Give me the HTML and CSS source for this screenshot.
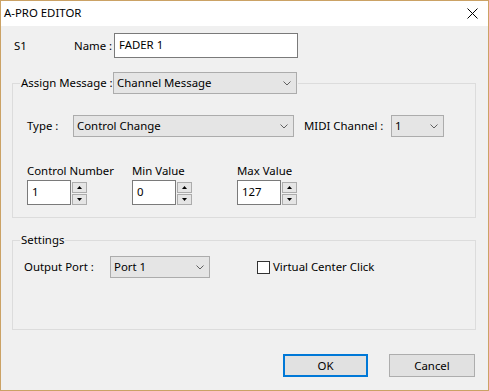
FILE: index.html
```html
<!DOCTYPE html>
<html lang="en">
<head>
    <meta charset="UTF-8">
    <title>A-PRO EDITOR</title>
    <link rel="stylesheet" href="styles.css">
</head>
<body>
    <div class="window">
        <div class="titlebar">
            <span class="title">A-PRO EDITOR</span>
            <svg class="close" width="11" height="11" viewBox="0 0 11 11">
                <path d="M0.5 0.5 L10.5 10.5 M10.5 0.5 L0.5 10.5" stroke="#000" stroke-width="1" fill="none"/>
            </svg>
        </div>

        <div class="content">
            <div class="name-row">
                <span class="slot">S1</span>
                <span class="name-label">Name :</span>
                <div class="textbox name-box">FADER 1</div>
            </div>

            <fieldset class="group assign">
                <legend>
                    <span class="legend-label">Assign Message :</span>
                    <div class="combo legend-combo">
                        <span>Channel Message</span>
                        <svg class="chevron" width="8" height="5" viewBox="0 0 8 5"><path d="M0.5 0.5 L4 4 L7.5 0.5" stroke="#606060" fill="none"/></svg>
                    </div>
                </legend>

                <div class="type-row">
                    <span class="type-label">Type :</span>
                    <div class="combo type-combo">
                        <span>Control Change</span>
                        <svg class="chevron" width="8" height="5" viewBox="0 0 8 5"><path d="M0.5 0.5 L4 4 L7.5 0.5" stroke="#606060" fill="none"/></svg>
                    </div>
                    <span class="midi-label">MIDI Channel :</span>
                    <div class="combo midi-combo">
                        <span>1</span>
                        <svg class="chevron" width="8" height="5" viewBox="0 0 8 5"><path d="M0.5 0.5 L4 4 L7.5 0.5" stroke="#606060" fill="none"/></svg>
                    </div>
                </div>

                <div class="spin-row">
                    <div class="spin-field">
                        <div class="spin-title">Control Number</div>
                        <div class="spin">
                            <div class="textbox spin-box">1</div>
                            <div class="spin-buttons">
                                <div class="spin-btn"><svg width="5" height="3" viewBox="0 0 5 3"><path d="M0 3 L2.5 0 L5 3 Z" fill="#000"/></svg></div>
                                <div class="spin-btn"><svg width="5" height="3" viewBox="0 0 5 3"><path d="M0 0 L2.5 3 L5 0 Z" fill="#000"/></svg></div>
                            </div>
                        </div>
                    </div>
                    <div class="spin-field">
                        <div class="spin-title">Min Value</div>
                        <div class="spin">
                            <div class="textbox spin-box">0</div>
                            <div class="spin-buttons">
                                <div class="spin-btn"><svg width="5" height="3" viewBox="0 0 5 3"><path d="M0 3 L2.5 0 L5 3 Z" fill="#000"/></svg></div>
                                <div class="spin-btn"><svg width="5" height="3" viewBox="0 0 5 3"><path d="M0 0 L2.5 3 L5 0 Z" fill="#000"/></svg></div>
                            </div>
                        </div>
                    </div>
                    <div class="spin-field">
                        <div class="spin-title">Max Value</div>
                        <div class="spin">
                            <div class="textbox spin-box">127</div>
                            <div class="spin-buttons">
                                <div class="spin-btn"><svg width="5" height="3" viewBox="0 0 5 3"><path d="M0 3 L2.5 0 L5 3 Z" fill="#000"/></svg></div>
                                <div class="spin-btn"><svg width="5" height="3" viewBox="0 0 5 3"><path d="M0 0 L2.5 3 L5 0 Z" fill="#000"/></svg></div>
                            </div>
                        </div>
                    </div>
                </div>
            </fieldset>

            <fieldset class="group settings">
                <legend>Settings</legend>
                <div class="port-row">
                    <span class="port-label">Output Port :</span>
                    <div class="combo port-combo">
                        <span>Port 1</span>
                        <svg class="chevron" width="8" height="5" viewBox="0 0 8 5"><path d="M0.5 0.5 L4 4 L7.5 0.5" stroke="#606060" fill="none"/></svg>
                    </div>
                    <span class="checkbox"></span>
                    <span class="check-label">Virtual Center Click</span>
                </div>
            </fieldset>

            <div class="buttons">
                <div class="btn btn-default">OK</div>
                <div class="btn">Cancel</div>
            </div>
        </div>
    </div>
</body>
</html>
```

FILE: styles.css
```css
/* Dialog window */
body {
    margin: 0;
    font-family: 'Noto Sans', 'Open Sans', sans-serif;
    font-size: 11.4px;
    line-height: 16px;
    color: #000;
    background: #f0f0f0;
    white-space: nowrap;
}

.window {
    width: 489px;
    height: 391px;
    box-sizing: border-box;
    border: 1px solid #cba265;
    background: #f0f0f0;
    display: flex;
    flex-direction: column;
}

.titlebar {
    flex: none;
    height: 25px;
    background: #fff;
    display: flex;
    align-items: center;
    justify-content: space-between;
    padding: 0 10px 0 3px;
}

.title {
    margin-top: -2px;
}

.close {
    margin-top: -1px;
}

.content {
    padding: 7px 12px 0 11px;
}

/* Shared controls */
.textbox {
    box-sizing: border-box;
    flex: none;
    height: 25px;
    background: #fff;
    border: 1px solid #7a7a7a;
    padding: 0 4px;
    line-height: 21px;
}

.combo {
    box-sizing: border-box;
    flex: none;
    height: 22px;
    background: #e5e5e5;
    border: 1px solid #acacac;
    display: flex;
    align-items: center;
    justify-content: space-between;
    padding: 0 5px 0 3px;
}

.chevron {
    flex: none;
}

/* Name row */
.name-row {
    display: flex;
    align-items: center;
}

.slot {
    flex: none;
    width: 60px;
    margin-left: 2px;
}

.name-label {
    flex: none;
    width: 40px;
}

.name-box {
    width: 184px;
}

/* Group boxes */
.group {
    margin: 14px 0 0;
    border: 1px solid #dcdcdc;
    padding: 0 0 0 7px;
    min-width: 0;
}

.group legend {
    padding: 0 1px;
}

.assign legend {
    display: flex;
    align-items: center;
}

.legend-label {
    flex: none;
    width: 92px;
}

.legend-combo {
    width: 184px;
}

.type-row {
    display: flex;
    align-items: center;
    margin: 21px 0 0 7px;
}

.type-label {
    flex: none;
    width: 46px;
}

.type-combo {
    width: 221px;
}

.midi-label {
    flex: none;
    width: 87px;
    margin-left: 10px;
}

.midi-combo {
    width: 53px;
}

.spin-row {
    display: flex;
    margin: 26px 0 12px 7px;
}

.spin-field {
    flex: none;
    width: 105px;
}

.spin-title {
    margin-bottom: 1px;
}

.spin {
    display: flex;
}

.spin-box {
    width: 44px;
}

.spin-buttons {
    display: flex;
    flex-direction: column;
    gap: 1px;
    margin: 2px 0 0 1px;
}

.spin-btn {
    box-sizing: border-box;
    width: 15px;
    height: 11px;
    background: #e5e5e5;
    border: 1px solid #acacac;
    display: flex;
    align-items: center;
    justify-content: center;
}

/* Settings */
.settings {
    padding-bottom: 51px;
}

.port-row {
    display: flex;
    align-items: center;
    margin: 8px 0 0 4px;
}

.port-label {
    flex: none;
    width: 86px;
}

.port-combo {
    width: 100px;
}

.checkbox {
    box-sizing: border-box;
    flex: none;
    width: 13px;
    height: 13px;
    border: 1px solid #333;
    background: #fff;
    margin-left: 47px;
}

.check-label {
    margin-left: 3px;
}

/* Dialog buttons */
.buttons {
    display: flex;
    justify-content: flex-end;
    gap: 21px;
    margin: 24px 1px 0 0;
}

.btn {
    box-sizing: border-box;
    width: 86px;
    height: 23px;
    background: #e1e1e1;
    border: 1px solid #adadad;
    display: flex;
    align-items: center;
    justify-content: center;
}

.btn-default {
    width: 85px;
    border: 2px solid #0078d7;
}
```
